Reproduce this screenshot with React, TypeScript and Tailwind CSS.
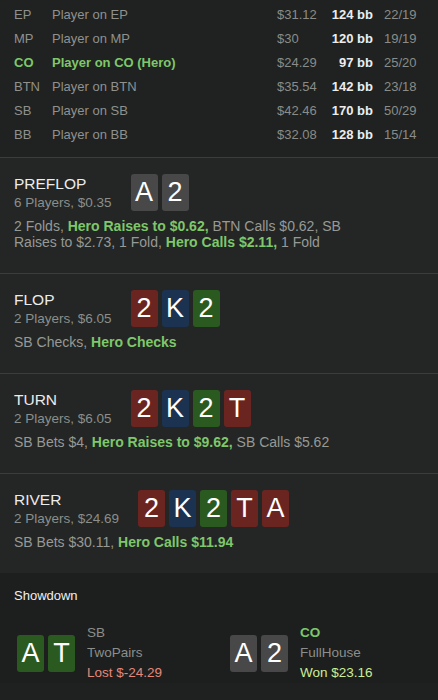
import React from "react";

type Suit = "gray" | "red" | "blue" | "green";

type Card = { rank: string; suit: Suit };

type Seat = {
  pos: string;
  name: string;
  stack: string;
  bb: string;
  vpip: string;
  hero?: boolean;
};

type Part = { text: string; hero?: boolean };

type Street = {
  title: string;
  sub: string;
  cards: Card[];
  actions: Part[];
};

const seats: Seat[] = [
  { pos: "EP", name: "Player on EP", stack: "$31.12", bb: "124 bb", vpip: "22/19" },
  { pos: "MP", name: "Player on MP", stack: "$30", bb: "120 bb", vpip: "19/19" },
  { pos: "CO", name: "Player on CO (Hero)", stack: "$24.29", bb: "97 bb", vpip: "25/20", hero: true },
  { pos: "BTN", name: "Player on BTN", stack: "$35.54", bb: "142 bb", vpip: "23/18" },
  { pos: "SB", name: "Player on SB", stack: "$42.46", bb: "170 bb", vpip: "50/29" },
  { pos: "BB", name: "Player on BB", stack: "$32.08", bb: "128 bb", vpip: "15/14" },
];

const board: Card[] = [
  { rank: "2", suit: "red" },
  { rank: "K", suit: "blue" },
  { rank: "2", suit: "green" },
  { rank: "T", suit: "red" },
  { rank: "A", suit: "red" },
];

const streets: Street[] = [
  {
    title: "PREFLOP",
    sub: "6 Players, $0.35",
    cards: [
      { rank: "A", suit: "gray" },
      { rank: "2", suit: "gray" },
    ],
    actions: [
      { text: "2 Folds, " },
      { text: "Hero Raises to $0.62, ", hero: true },
      { text: "BTN Calls $0.62, SB Raises to $2.73, 1 Fold, " },
      { text: "Hero Calls $2.11, ", hero: true },
      { text: "1 Fold" },
    ],
  },
  {
    title: "FLOP",
    sub: "2 Players, $6.05",
    cards: board.slice(0, 3),
    actions: [{ text: "SB Checks, " }, { text: "Hero Checks", hero: true }],
  },
  {
    title: "TURN",
    sub: "2 Players, $6.05",
    cards: board.slice(0, 4),
    actions: [
      { text: "SB Bets $4, " },
      { text: "Hero Raises to $9.62, ", hero: true },
      { text: "SB Calls $5.62" },
    ],
  },
  {
    title: "RIVER",
    sub: "2 Players, $24.69",
    cards: board,
    actions: [{ text: "SB Bets $30.11, " }, { text: "Hero Calls $11.94", hero: true }],
  },
];

const suitBg: Record<Suit, string> = {
  gray: "bg-[#484848]",
  red: "bg-[#6b2521]",
  blue: "bg-[#1b3350]",
  green: "bg-[#2b5a20]",
};

function PlayingCard({ card }: { card: Card }) {
  return (
    <div
      className={`flex h-[37px] w-[27px] items-center justify-center rounded-[3px] text-[27px] leading-none text-white ${suitBg[card.suit]}`}
    >
      {card.rank}
    </div>
  );
}

function StreetBlock({ street, last }: { street: Street; last?: boolean }) {
  return (
    <section
      className={`bg-[#232624] px-[14px] pt-4 pb-[23px] ${last ? "" : "border-b border-[#3a3d3b]"}`}
    >
      <div className="flex items-start gap-[19px]">
        <div>
          <div className="text-[15.5px] leading-5 text-[#ececec]">{street.title}</div>
          <div className="text-[13.5px] leading-[18px] text-[#8c8e8c]">{street.sub}</div>
        </div>
        <div className="flex gap-1">
          {street.cards.map((c, i) => (
            <PlayingCard key={i} card={c} />
          ))}
        </div>
      </div>
      <p className="mt-1.5 max-w-[350px] text-[14px] leading-4 text-[#979997]">
        {street.actions.map((p, i) =>
          p.hero ? (
            <span key={i} className="font-bold text-[#7fc76b]">
              {p.text}
            </span>
          ) : (
            <span key={i}>{p.text}</span>
          )
        )}
      </p>
    </section>
  );
}

function ShowdownPlayer({
  cards,
  pos,
  hand,
  result,
  won,
}: {
  cards: Card[];
  pos: string;
  hand: string;
  result: string;
  won?: boolean;
}) {
  return (
    <div className="flex items-center gap-3">
      <div className="flex gap-1">
        {cards.map((c, i) => (
          <PlayingCard key={i} card={c} />
        ))}
      </div>
      <div className="text-[13.5px] leading-5">
        <div className={won ? "font-bold text-[#7fc76b]" : "text-[#8c8e8c]"}>{pos}</div>
        <div className="text-[#8c8e8c]">{hand}</div>
        <div className={won ? "text-[#cdee95]" : "text-[#e7877a]"}>{result}</div>
      </div>
    </div>
  );
}

export default function App() {
  return (
    <div className="h-[700px] w-[438px] overflow-hidden bg-[#1e211f] font-['Liberation_Sans',Arial,sans-serif]">
      <div className="border-b border-[#3a3d3b] bg-[#1f2220] pt-[3px] pb-[10px] text-[13px] leading-6">
        {seats.map((s) => (
          <div key={s.pos} className="grid grid-cols-[38px_225px_48px_48px_1fr] pl-[14px]">
            <span className={s.hero ? "font-bold text-[#7fc76b]" : "text-[#8f918f]"}>{s.pos}</span>
            <span className={s.hero ? "font-bold text-[#7fc76b]" : "text-[#8f918f]"}>{s.name}</span>
            <span className="text-[#8a8c8a]">{s.stack}</span>
            <span className="text-right font-semibold text-[#ededed]">{s.bb}</span>
            <span className="pl-[11px] text-[#8a8c8a]">{s.vpip}</span>
          </div>
        ))}
      </div>

      {streets.map((st, i) => (
        <StreetBlock key={st.title} street={st} last={i === streets.length - 1} />
      ))}

      <section className="bg-[#1c1f1d] pt-[13px]">
        <div className="px-[14px] text-[13px] font-medium leading-5 text-[#f0f0f0]">Showdown</div>
        <div className="mt-[17px] grid grid-cols-[213px_1fr] pl-[17px]">
          <ShowdownPlayer
            cards={[
              { rank: "A", suit: "green" },
              { rank: "T", suit: "green" },
            ]}
            pos="SB"
            hand="TwoPairs"
            result="Lost $-24.29"
          />
          <ShowdownPlayer
            cards={[
              { rank: "A", suit: "gray" },
              { rank: "2", suit: "gray" },
            ]}
            pos="CO"
            hand="FullHouse"
            result="Won $23.16"
            won
          />
        </div>
      </section>
    </div>
  );
}
